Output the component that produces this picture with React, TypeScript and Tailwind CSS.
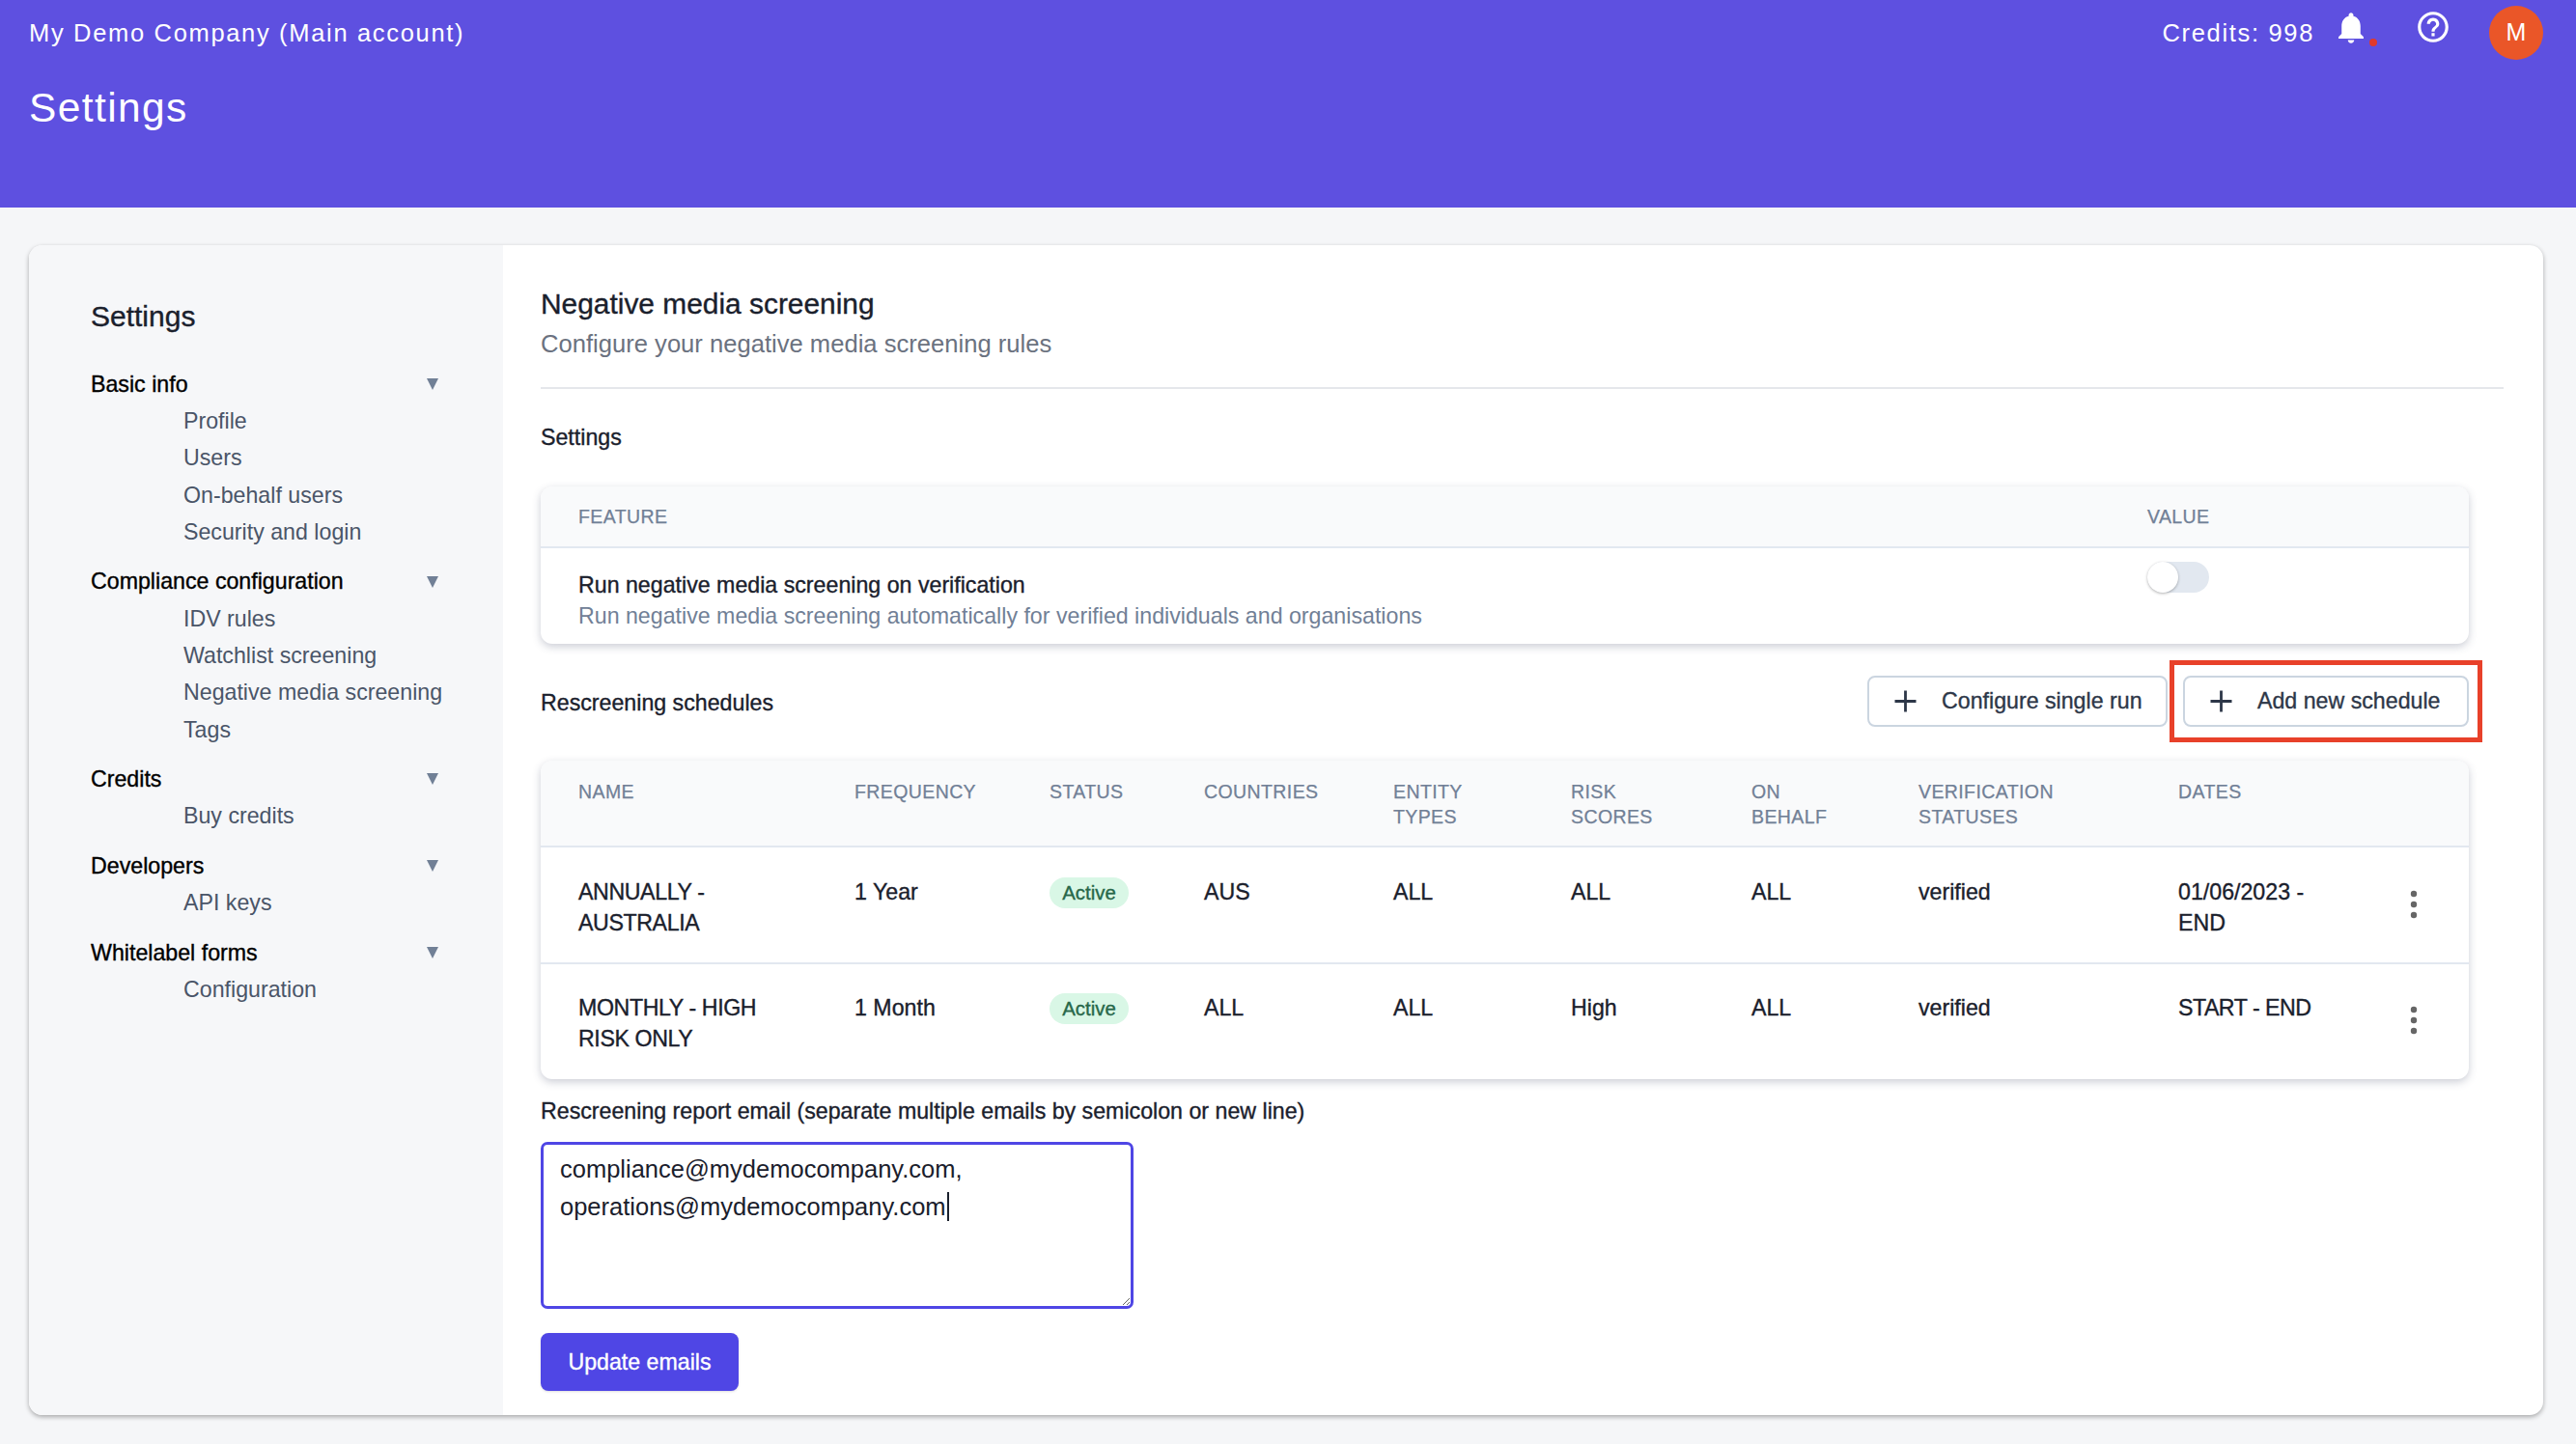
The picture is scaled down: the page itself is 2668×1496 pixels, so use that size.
import React from "react";

const nav = [
  { title: "Basic info", items: ["Profile", "Users", "On-behalf users", "Security and login"] },
  { title: "Compliance configuration", items: ["IDV rules", "Watchlist screening", "Negative media screening", "Tags"] },
  { title: "Credits", items: ["Buy credits"] },
  { title: "Developers", items: ["API keys"] },
  { title: "Whitelabel forms", items: ["Configuration"] },
];

const medium = "[-webkit-text-stroke:0.35px]";

function Plus() {
  return (
    <svg width="23" height="23" viewBox="0 0 23 23" className="shrink-0">
      <path d="M11.5 0.5v22M0.5 11.5h22" stroke="#2d3748" strokeWidth="2.8" fill="none" />
    </svg>
  );
}

function Kebab() {
  return (
    <svg width="8" height="30" viewBox="0 0 8 30" className="mx-auto block">
      <circle cx="4" cy="4" r="3.2" fill="#666" />
      <circle cx="4" cy="15" r="3.2" fill="#666" />
      <circle cx="4" cy="26" r="3.2" fill="#666" />
    </svg>
  );
}

function Badge() {
  return (
    <span className="inline-flex h-[32px] w-[82px] items-center justify-center rounded-full bg-[#d9f7e6] text-[20.4px] text-[#276749] [-webkit-text-stroke:0.35px]">
      Active
    </span>
  );
}

const rows = [
  { name: ["ANNUALLY -", "AUSTRALIA"], freq: "1 Year", country: "AUS", risk: "ALL", dates: ["01/06/2023 -", "END"], h: "h-[121px]", pt: "pt-[30px]", kb: "pb-[1px]", dt: "" },
  { name: ["MONTHLY - HIGH", "RISK ONLY"], freq: "1 Month", country: "ALL", risk: "High", dates: ["START - END"], h: "h-[120px]", pt: "pt-[29px]", kb: "pb-[4px]", dt: "tracking-[-0.5px]" },
];

const heads: string[][] = [
  ["NAME"],
  ["FREQUENCY"],
  ["STATUS"],
  ["COUNTRIES"],
  ["ENTITY", "TYPES"],
  ["RISK", "SCORES"],
  ["ON", "BEHALF"],
  ["VERIFICATION", "STATUSES"],
  ["DATES"],
];

const colWidths = ["w-[286px]", "w-[202px]", "w-[160px]", "w-[196px]", "w-[184px]", "w-[187px]", "w-[173px]", "w-[269px]"];

const cell = "pl-[39px] align-top text-left";

export default function App() {
  return (
    <div className="min-h-[1496px] bg-[#f5f6f8] font-['Liberation_Sans',sans-serif] text-[23.2px] text-[#1a202c]">
      <header className="h-[215px] bg-[#5e50e0] px-[30px] text-white">
        <div className="flex items-start justify-between">
          <div className="pt-[18px] text-[25.5px] leading-[32px] tracking-[1.67px]">My Demo Company (Main account)</div>
          <div className="flex items-start pr-[4px]">
            <div className="pt-[18px] text-[25.5px] leading-[32px] tracking-[1.67px]">Credits: 998</div>
            <div className="relative ml-[25px] mt-[13px] h-[32px] w-[26px]">
              <svg width="26" height="32" viewBox="4 2.5 16 19.5" fill="#fff">
                <path d="M12 22c1.1 0 2-.9 2-2h-4c0 1.1.89 2 2 2zm6-6v-5c0-3.07-1.64-5.64-4.5-6.32V4c0-.83-.67-1.5-1.5-1.5s-1.5.67-1.5 1.5v.68C7.63 5.36 6 7.92 6 11v5l-2 2v1h16v-1l-2-2z" />
              </svg>
              <span className="absolute left-[32px] top-[27px] h-[8px] w-[8px] rounded-full bg-[#e0392b]" />
            </div>
            <svg width="38" height="38" viewBox="0 0 24 24" fill="#fff" className="ml-[53px] mt-[9px]">
              <path d="M11 18h2v-2h-2v2zm1-16C6.48 2 2 6.48 2 12s4.48 10 10 10 10-4.48 10-10S17.52 2 12 2zm0 18c-4.41 0-8-3.59-8-8s3.59-8 8-8 8 3.59 8 8-3.59 8-8 8zm0-14c-2.21 0-4 1.79-4 4h2c0-1.1.9-2 2-2s2 .9 2 2c0 2-3 1.75-3 5h2c0-2.25 3-2.5 3-5 0-2.21-1.79-4-4-4z" />
            </svg>
            <div className="ml-[39px] mt-[6px] flex h-[56px] w-[56px] items-center justify-center rounded-full bg-[#ea5628] text-[25px]">M</div>
          </div>
        </div>
        <h1 className="mt-[22px] text-[42.5px] font-normal leading-[56px] tracking-[1.4px]">Settings</h1>
      </header>

      <div className="ml-[30px] mr-[34px] mt-[39px] flex h-[1212px] overflow-hidden rounded-[14px] bg-white shadow-[0_2px_5px_rgba(0,0,0,0.32)]">
        <aside className="w-[491px] shrink-0 bg-[#f6f7f9] pl-[64px] pr-[60px] pt-[54px]">
          <div className={`text-[30px] leading-[40px] ${medium}`}>Settings</div>
          <div className="mt-[31px] flex flex-col gap-[13.2px]">
            {nav.map((g) => (
              <div key={g.title}>
                <div className={`flex h-[38.3px] items-center justify-between text-black ${medium}`}>
                  <span>{g.title}</span>
                  <span className="mr-[7px] h-0 w-0 border-x-[6.5px] border-t-[12px] border-x-transparent border-t-[#718096]" />
                </div>
                <ul>
                  {g.items.map((i) => (
                    <li key={i} className="flex h-[38.3px] items-center whitespace-nowrap pl-[96px] text-[#4a5568]">
                      {i}
                    </li>
                  ))}
                </ul>
              </div>
            ))}
          </div>
        </aside>

        <main className="min-w-0 flex-1 pl-[39px] pr-[41px] pt-[41px]">
          <h2 className={`text-[29.9px] leading-[40px] ${medium}`}>Negative media screening</h2>
          <p className="mt-[1px] text-[25.6px] leading-[41px] text-[#6b7280]">Configure your negative media screening rules</p>
          <div className="mt-[24px] border-t-2 border-[#e5e7eb]" />
          <div className={`mt-[34px] leading-[32px] ${medium}`}>Settings</div>

          <div className="mr-[36px]">
            <div className="mt-[35px] overflow-hidden rounded-[12px] bg-white shadow-[0_3px_8px_rgba(50,60,90,0.25)]">
              <div className="flex h-[64px] items-center border-b-2 border-[#e2e8f0] bg-[#f9fafb] pl-[39px] pt-[2px] text-[19.5px] tracking-[0.4px] text-[#718096] [-webkit-text-stroke:0.25px]">
                <span className="w-[1625px]">FEATURE</span>
                <span>VALUE</span>
              </div>
              <div className="flex h-[99px] pl-[39px]">
                <div className="w-[1625px] pt-[22px] leading-[32px]">
                  <div className={medium}>Run negative media screening on verification</div>
                  <div className="text-[#718096]">Run negative media screening automatically for verified individuals and organisations</div>
                </div>
                <div className="relative mt-[14px] h-[32px] w-[64px] rounded-full bg-[#e2e8f0]">
                  <span className="absolute left-0 top-0 h-[32px] w-[32px] rounded-full bg-white shadow-[0_1px_3px_rgba(0,0,0,0.3)]" />
                </div>
              </div>
            </div>

            <div className="mt-[33px] flex items-center justify-between">
              <div className={`pt-[2px] leading-[32px] ${medium}`}>Rescreening schedules</div>
              <div className="flex gap-[16px]">
                <button className={`flex h-[53px] w-[311px] items-center gap-[26px] whitespace-nowrap rounded-[8px] border-2 border-[#cbd5e0] bg-white pl-[26px] text-[#2d3748] ${medium}`}>
                  <Plus />
                  Configure single run
                </button>
                <div className="relative">
                  <button className={`flex h-[53px] w-[296px] items-center gap-[26px] whitespace-nowrap rounded-[8px] border-2 border-[#cbd5e0] bg-white pl-[26px] text-[#2d3748] ${medium}`}>
                    <Plus />
                    Add new schedule
                  </button>
                  <div className="absolute inset-x-[-14px] inset-y-[-16px] border-[5px] border-[#e8412a]" />
                </div>
              </div>
            </div>

            <div className="mt-[35px] overflow-hidden rounded-[12px] bg-white shadow-[0_3px_8px_rgba(50,60,90,0.25)]">
              <table className="w-full table-fixed border-collapse">
                <colgroup>
                  {colWidths.map((w) => (
                    <col key={w} className={w} />
                  ))}
                  <col className="w-[220px]" />
                  <col className="w-[120px]" />
                </colgroup>
                <thead>
                  <tr className="h-[89px] border-b-2 border-[#e2e8f0] bg-[#f9fafb] text-[19.5px] leading-[25.5px] text-[#718096]">
                    {heads.map((h) => (
                      <th key={h[0]} className="pl-[39px] pt-[20px] text-left align-top font-normal tracking-[0.4px] [-webkit-text-stroke:0.25px]">
                        {h.map((l) => (
                          <div key={l}>{l}</div>
                        ))}
                      </th>
                    ))}
                    <th />
                  </tr>
                </thead>
                <tbody className="leading-[32px]">
                  {rows.map((r, i) => (
                    <tr key={i} className={`${r.h} ${i === 0 ? "border-b-2 border-[#e2e8f0]" : ""}`}>
                      <td className={`${cell} ${r.pt} tracking-[-0.4px] ${medium}`}>
                        {r.name.map((l) => (
                          <div key={l} className="whitespace-nowrap">{l}</div>
                        ))}
                      </td>
                      <td className={`${cell} ${r.pt} ${medium}`}>{r.freq}</td>
                      <td className={`${cell} ${r.pt}`}>
                        <Badge />
                      </td>
                      <td className={`${cell} ${r.pt} ${medium}`}>{r.country}</td>
                      <td className={`${cell} ${r.pt} ${medium}`}>ALL</td>
                      <td className={`${cell} ${r.pt} ${medium}`}>{r.risk}</td>
                      <td className={`${cell} ${r.pt} ${medium}`}>ALL</td>
                      <td className={`${cell} ${r.pt} ${medium}`}>verified</td>
                      <td className={`${cell} ${r.pt} ${r.dt} ${medium}`}>
                        {r.dates.map((l) => (
                          <div key={l} className="whitespace-nowrap">{l}</div>
                        ))}
                      </td>
                      <td className={`pl-[5px] align-middle ${r.kb}`}>
                        <Kebab />
                      </td>
                    </tr>
                  ))}
                </tbody>
              </table>
            </div>
          </div>

          <label className={`mt-[17px] block leading-[32px] ${medium}`}>
            Rescreening report email (separate multiple emails by semicolon or new line)
          </label>
          <div className="relative mt-[16px] w-[614px]">
            <textarea
              readOnly
              defaultValue={"compliance@mydemocompany.com,\noperations@mydemocompany.com"}
              className="block h-[173px] w-full rounded-[7px] border-[3px] border-[#4f46e5] bg-white px-[17px] py-[6px] text-[25.5px] leading-[39px] text-[#1a202c] outline-none"
            />
            <span className="absolute left-[421px] top-[52px] h-[30px] w-[2px] bg-[#1a202c]" />
          </div>
          <button className={`mt-[25px] flex h-[60px] w-[205px] items-center justify-center rounded-[8px] bg-[#4f46e5] text-white shadow-sm ${medium}`}>
            Update emails
          </button>
        </main>
      </div>
    </div>
  );
}
